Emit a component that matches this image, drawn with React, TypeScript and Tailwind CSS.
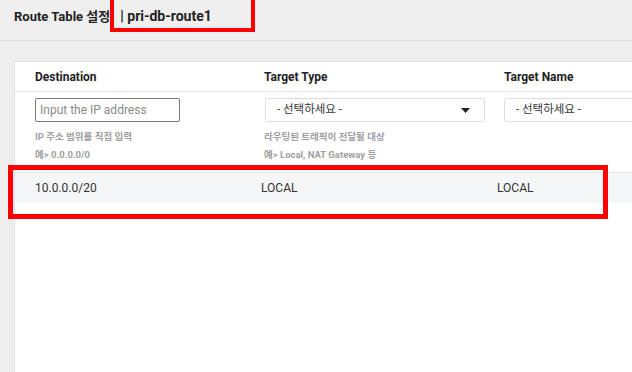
export default function App() {
  const caret = (
    <svg width="9" height="5" viewBox="0 0 9 5" className="shrink-0">
      <path d="M0 0 H9 L4.5 5 Z" fill="#222" />
    </svg>
  );
  return (
    <div className="relative w-[632px] h-[372px] overflow-hidden bg-[#efefef] font-['Roboto','Noto_Sans_CJK_KR',sans-serif] text-[#333]">
      <div className="h-[41px] border-b border-[#dcdcdc] pl-[14px] pt-[7px]">
        <div className="flex items-baseline font-bold leading-[18px] text-[#222]">
          <span className="text-[13px]">Route Table 설정</span>
          <span className="ml-[10px] text-[14px]">| pri-db-route1</span>
        </div>
      </div>
      <div className="ml-[14px] mt-[20px] h-[320px] bg-white border-t border-l border-[#e4e4e4]">
        <div className="h-[30px] border-b border-[#e4e4e4] pl-[20px] grid grid-cols-[229px_240px_1fr] items-center text-[12px] font-bold text-[#222]">
          <div>Destination</div>
          <div>Target Type</div>
          <div>Target Name</div>
        </div>
        <div className="h-[80px] pl-[20px] pt-[6px] grid grid-cols-[229px_240px_1fr]">
          <div>
            <div className="w-[145px] h-[24px] border border-[#7a7a7a] rounded-[2px] pl-[4px] flex items-center text-[12px] text-[#8a8a8a]">
              Input the IP address
            </div>
            <div className="mt-[6px] text-[9.5px] font-bold leading-[18px] text-[#a0a0a0]">IP 주소 범위를 직접 입력</div>
            <div className="text-[9.5px] font-bold leading-[18px] text-[#a0a0a0]">예&gt; 0.0.0.0/0</div>
          </div>
          <div>
            <div className="ml-[1px] w-[220px] h-[24px] border border-[#dedede] rounded-[2px] pl-[11px] pr-[14px] flex items-center justify-between text-[11.5px] text-[#333]">
              <span>- 선택하세요 -</span>
              {caret}
            </div>
            <div className="mt-[6px] text-[9.5px] font-bold leading-[18px] text-[#a0a0a0]">라우팅된 트래픽이 전달될 대상</div>
            <div className="text-[9.5px] font-bold leading-[18px] text-[#a0a0a0]">예&gt; Local, NAT Gateway 등</div>
          </div>
          <div>
            <div className="w-[220px] h-[24px] border border-[#dedede] rounded-[2px] pl-[11px] flex items-center text-[11.5px] text-[#333]">
              <span>- 선택하세요 -</span>
            </div>
          </div>
        </div>
        <div className="h-[31px] border-t border-[#e9e9e9] bg-[#f5f6f8] pl-[20px] grid grid-cols-[226px_236px_1fr] items-center text-[12px] text-[#333]">
          <div>10.0.0.0/20</div>
          <div>LOCAL</div>
          <div>LOCAL</div>
        </div>
      </div>
      <div className="absolute left-[110px] top-[-4px] w-[145px] h-[36px] border-[4px] border-[#ff0000]" />
      <div className="absolute left-[8px] top-[165px] w-[600px] h-[54px] border-[5px] border-[#ff0000]" />
    </div>
  );
}
